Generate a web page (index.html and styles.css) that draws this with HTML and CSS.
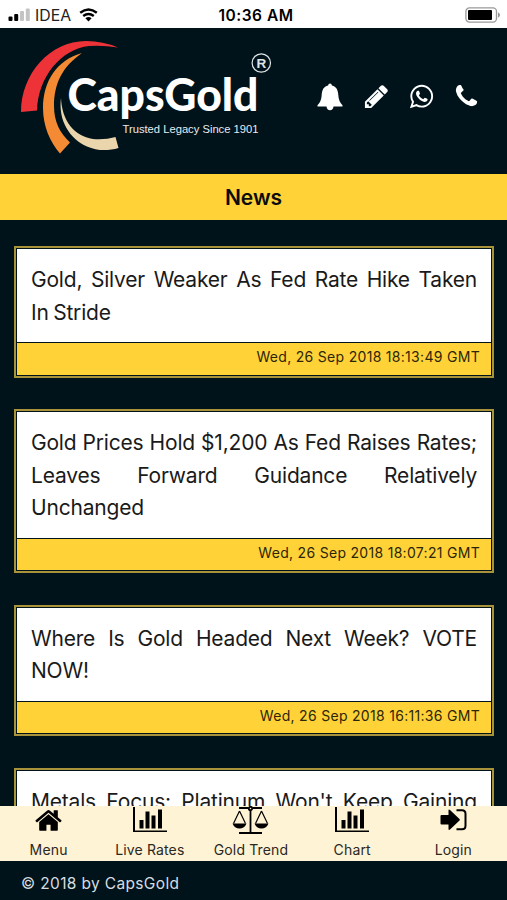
FILE: index.html
```
<!DOCTYPE html>
<html lang="en">
<head>
  <meta charset="utf-8">
  <meta name="viewport" content="width=device-width, initial-scale=1">
  <title>CapsGold - News</title>
  <link rel="stylesheet" href="styles.css">
</head>
<body>
  <div class="app">
    <div class="status-bar">
      <div class="carrier">
        <svg class="signal" width="23" height="14" viewBox="0 0 23 14">
          <rect x="0.5" y="8.5" width="4" height="4.5" rx="1"/>
          <rect x="6.2" y="6" width="4" height="7" rx="1"/>
          <rect class="off" x="12" y="3" width="4" height="10" rx="1"/>
          <rect class="off" x="17.8" y="0.5" width="4" height="12.5" rx="1"/>
        </svg>
        <span class="carrier-name">IDEA</span>
        <svg class="wifi" width="19" height="14" viewBox="0 0 19 14">
          <path d="M1.2 4.8Q9.5-1.8 17.8 4.8"/>
          <path d="M4.2 8Q9.5 3.8 14.8 8"/>
          <path class="dot" d="M6.4 10.3Q9.5 7.8 12.6 10.3L9.5 13.5z"/>
        </svg>
      </div>
      <div class="time">10:36 AM</div>
      <svg class="battery" width="37" height="16" viewBox="0 0 37 16">
        <rect class="case" x="0.9" y="0.9" width="30.6" height="14.2" rx="3.5"/>
        <rect x="3" y="3" width="24" height="10" rx="1"/>
        <path class="cap" d="M33 5.2q2 1 2 2.8t-2 2.8z"/>
      </svg>
    </div>

    <div class="header">
      <svg class="logo" width="280" height="145" viewBox="0 28 280 145">
        <path fill="#ee3338" d="M21 112C21 74 50 41 86 41Q103 41 118 47.5Q103 45 89 46C61 49 38 77 37 110.500z"/>
        <path fill="#f58a35" d="M82 53C57 60 43 81 43 108C43 126 50 142 60 153.500L70 142.500C60 133 54 122 54 106C54 84 62 67 82 53z"/>
        <path fill="#ead5ac" d="M61 98C62 121 74 136 93 139Q105 140 115.500 137L118.500 148C108 151 97 151 87 146.500C70 139 58 121 61 98z"/>
        <text class="brand" x="67.500" y="111" textLength="191" lengthAdjust="spacingAndGlyphs">CapsGold</text>
        <text class="tagline" x="122.500" y="133" textLength="136" lengthAdjust="spacingAndGlyphs">Trusted Legacy Since 1901</text>
        <circle class="reg-ring" cx="261.300" cy="63" r="9.200"/>
        <text class="reg" x="256.500" y="67.800">R</text>
      </svg>
      <div class="header-icons">
        <svg width="26" height="28" viewBox="0 0 26 28"><path d="M13 0.500q1.700 0 1.900 1.900C19.500 3.500 21 7 21.300 12q.3 6.500 4.200 10.300v1.200H16.500Q16 27.300 13 27.300T9.500 23.500H.5v-1.200Q4.400 18.500 4.700 12C5 7 6.500 3.500 11.100 2.400Q11.300.5 13 .5z"/></svg>
        <svg width="27" height="27" viewBox="0 0 1792 1792"><path d="M491 1536l91-91-235-235-91 91v107h128v128h107zm523-928q0-22-22-22-10 0-17 7l-542 542q-7 7-7 17 0 22 22 22 10 0 17-7l542-542q7-7 7-17zm-54-192l416 416-832 832h-416v-416zm683 96q0 53-37 90l-166 166-416-416 166-165q36-38 90-38 53 0 91 38l235 234q37 39 37 91z"/></svg>
        <svg width="27" height="27" viewBox="0 0 1792 1792"><path d="M1113 974q13 0 97.500 44t89.500 53q2 5 2 15 0 33-17 76-16 39-71 65.500t-102 26.500q-57 0-190-62-98-45-170-118t-148-185q-72-107-71-194v-8q3-91 74-158 24-22 52-22 6 0 18 1.500t19 1.500q19 0 26.500 6.500t15.500 27.500q8 20 33 88t25 75q0 21-34.500 57.500t-34.500 46.500q0 7 5 15 34 73 102 137 56 53 151 101 12 7 22 7 15 0 54-48.500t52-48.500zm-203 530q127 0 243.500-50t200.500-134 134-200.500 50-243.500-50-243.500-134-200.500-200.500-134-243.500-50-243.500 50-200.500 134-134 200.500-50 243.500q0 203 120 368l-79 233 242-77q158 104 345 104zm0-1382q153 0 292.500 60t240.500 161 161 240.500 60 292.500-60 292.500-161 240.500-240.500 161-292.500 60q-195 0-365-94l-417 134 136-405q-108-178-108-389 0-153 60-292.500t161-240.500 240.500-161 292.500-60z"/></svg>
        <svg width="27" height="27" viewBox="0 0 1792 1792"><path d="M1600 1240q0 27-10 70.500t-21 68.500q-21 50-122 106-94 51-186 51-27 0-53-3.500t-57.500-12.500-47-14.500-55.500-20.500-49-18q-98-35-175-83-127-79-264-216t-216-264q-48-77-83-175-3-9-18-49t-20.500-55.500-14.500-47-12.500-57.500-3.500-53q0-92 51-186 56-101 106-122 25-11 68.500-21t70.500-10q14 0 21 3 18 6 53 76 11 19 30 54t35 63.500 31 53.500q3 4 17.500 25t21.500 35.500 7 28.500q0 20-28.500 50t-62 55-62 53-28.500 46q0 9 5 22.500t8.500 20.500 14 24 11.500 19q76 137 174 235t235 174q2 1 19 11.500t24 14 20.500 8.500 22.500 5q18 0 46-28.500t53-62 55-62 50-28.500q14 0 28.500 7t35.500 21.500 25 17.500q25 15 53.500 31t63.500 35 54 30q70 35 76 53 3 7 3 21z"/></svg>
      </div>
    </div>

    <div class="page-title">News</div>

    <div class="news-list">
      <div class="news">
        <p class="headline">Gold, Silver Weaker As Fed Rate Hike Taken In&nbsp;Stride</p>
        <p class="date">Wed, 26 Sep 2018 18:13:49 GMT</p>
      </div>
      <div class="news">
        <p class="headline">Gold Prices Hold $1,200 As Fed Raises Rates; Leaves Forward Guidance Relatively Unchanged</p>
        <p class="date">Wed, 26 Sep 2018 18:07:21 GMT</p>
      </div>
      <div class="news">
        <p class="headline">Where Is Gold Headed Next Week? VOTE NOW!</p>
        <p class="date">Wed, 26 Sep 2018 16:11:36 GMT</p>
      </div>
      <div class="news">
        <p class="headline cut">Metals Focus: Platinum Won't Keep Gaining</p>
      </div>
    </div>

    <div class="nav">
      <div class="nav-item">
        <svg width="29" height="29" viewBox="0 0 1792 1792"><path d="M1472 992v480q0 26-19 45t-45 19h-384v-384h-256v384h-384q-26 0-45-19t-19-45v-480q0-1 .5-3t.5-3l575-474 575 474q1 2 1 6zm223-69l-62 74q-8 9-21 11h-3q-13 0-21-7l-692-577-692 577q-12 8-24 7-13-2-21-11l-62-74q-8-10-7-23.500t11-21.500l719-599q32-26 76-26t76 26l244 204v-195q0-14 9-23t23-9h192q14 0 23 9t9 23v408l219 182q10 8 11 21.500t-7 23.500z"/></svg>
        <span>Menu</span>
      </div>
      <div class="nav-item">
        <svg width="34" height="29" viewBox="0 0 34 29"><path d="M0 1h2v23.500h32v1.500H0zM6.500 14h4v8.500h-4zM12.500 5.500h4v17h-4zM18.500 9.500h4v13h-4zM25 3.500h4v19h-4z"/></svg>
        <span>Live Rates</span>
      </div>
      <div class="nav-item">
        <svg class="scales" width="37" height="29" viewBox="0 0 37 29">
          <path class="line" d="M7 2h9.500M20.500 2H30M18.500 4v22M7 27h23"/>
          <path class="line thin" d="M7.500 5L1.500 17.500M7.500 5l6 12.500M29.500 5l-6 12.500M29.500 5l6 12.500"/>
          <circle class="line" cx="18.500" cy="2.500" r="1.700"/>
          <path d="M.5 17.500h14q-2 5-7 5t-7-5zM22.500 17.500h14q-2 5-7 5t-7-5z"/>
        </svg>
        <span>Gold Trend</span>
      </div>
      <div class="nav-item">
        <svg width="34" height="29" viewBox="0 0 34 29"><path d="M0 1h2v23.500h32v1.500H0zM6.500 14h4v8.500h-4zM12.500 5.500h4v17h-4zM18.500 9.500h4v13h-4zM25 3.500h4v19h-4z"/></svg>
        <span>Chart</span>
      </div>
      <div class="nav-item">
        <svg width="27" height="29" viewBox="0 0 27 29"><path d="M1.500 9h7V4.500q0-1.700 1.500-.5l9.500 9q.8.800 0 1.600l-9.500 9q-1.500 1.200-1.500-.5V18.500h-7Q.5 18.500.5 17.500v-7.500q0-1 1-1z"/><path class="bracket" d="M16.500 4.300h5.500q3.500 0 3.500 3.500v12q0 3.500-3.500 3.500h-5.500"/></svg>
        <span>Login</span>
      </div>
    </div>

    <div class="footer">© 2018 by CapsGold</div>
  </div>
</body>
</html>
```
FILE: styles.css
```
* {
  box-sizing: border-box;
}
body {
  margin: 0;
  background-color: #00131a;
  font-family: Inter, "Liberation Sans", sans-serif;
}
p {
  margin: 0;
}
svg {
  display: block;
  flex: none;
}
.app {
  display: flex;
  flex-direction: column;
  height: 100vh;
  overflow: hidden;
}

/* status bar */
.status-bar {
  display: grid;
  grid-template-columns: 1fr auto 1fr;
  align-items: center;
  flex: none;
  height: 28px;
  padding: 2px 5px 0 8px;
  background-color: #fff;
}
.carrier {
  display: flex;
  align-items: center;
}
.carrier-name {
  margin: 0 8px 0 4px;
  font-size: 15.8px;
  color: #222;
}
.signal .off {
  fill: #c4c4c4;
}
.wifi path {
  fill: none;
  stroke: #000;
  stroke-width: 2.4;
}
.wifi .dot {
  fill: #000;
  stroke: none;
}
.time {
  padding-left: 2px;
  font-size: 15.5px;
  font-weight: 600;
  letter-spacing: 0.5px;
}
.battery {
  justify-self: end;
}
.battery .case {
  fill: none;
  stroke: #999;
  stroke-width: 1.3;
}
.battery .cap {
  fill: #999;
}

/* header */
.header {
  display: flex;
  flex: none;
  height: 146px;
}
.brand {
  font-family: Lato, sans-serif;
  font-size: 45px;
  font-weight: 900;
  fill: #fff;
}
.tagline {
  font-family: "Liberation Sans", sans-serif;
  font-size: 11.8px;
  fill: #e8edef;
}
.reg {
  font-family: "Liberation Sans", sans-serif;
  font-size: 13.5px;
  font-weight: bold;
  fill: #dfe5e8;
}
.reg-ring {
  fill: none;
  stroke: #dfe5e8;
  stroke-width: 1.2;
}
.header-icons {
  display: flex;
  align-items: center;
  gap: 18px;
  margin-left: 36.5px;
  padding-bottom: 9px;
}
.header-icons svg {
  fill: #fff;
}
.header-icons svg:first-child {
  margin-right: 2px;
}

.page-title {
  flex: none;
  height: 46px;
  background-color: #ffd338;
  font-size: 21px;
  font-weight: 600;
  line-height: 47px;
  text-align: center;
  color: #0c0c0c;
}

/* news */
.news-list {
  display: flex;
  flex: 1;
  flex-direction: column;
  gap: 31.5px;
  min-height: 0;
  padding: 26px 13px 0 14px;
  overflow: hidden;
}
.news {
  flex: none;
  padding: 1px;
  border: 2px solid #a8933a;
}
.headline {
  padding: 15px 14px 13px;
  background-color: #fff;
  font-size: 21px;
  line-height: 32.5px;
  letter-spacing: -0.2px;
  word-spacing: -1.2px;
  text-align: justify;
  color: #1a1a1a;
}
.headline.cut {
  text-align-last: justify;
}
.date {
  height: 31.5px;
  margin-top: 1px;
  padding-right: 11px;
  background-color: #ffd338;
  font-size: 14px;
  line-height: 28px;
  letter-spacing: 0.3px;
  text-align: right;
  color: #2c2508;
}

/* bottom menu */
.nav {
  display: grid;
  grid-template-columns: repeat(5, 1fr);
  flex: none;
  height: 55px;
  margin-left: -2px;
  padding-right: 3px;
  background-color: #fff3d5;
}
.nav-item {
  display: flex;
  flex-direction: column;
  align-items: center;
  font-size: 14px;
  line-height: 29px;
  letter-spacing: 0.15px;
  color: #2a271f;
}
.nav .line {
  fill: none;
  stroke: #000;
  stroke-width: 1.8;
}
.nav .thin {
  stroke-width: 1.2;
}
.nav .bracket {
  fill: none;
  stroke: #000;
  stroke-width: 2;
}
.footer {
  flex: none;
  height: 39px;
  padding-left: 21px;
  font-size: 15.5px;
  line-height: 46px;
  letter-spacing: 0.35px;
  color: #d5dde1;
}
```
